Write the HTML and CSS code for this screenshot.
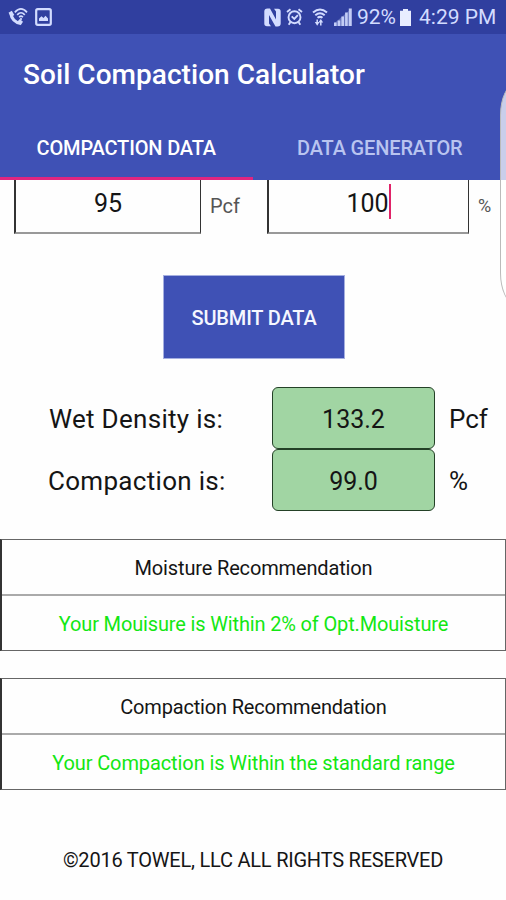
FILE: index.html
```html
<!DOCTYPE html>
<html lang="en">
<head>
<meta charset="utf-8">
<title>Soil Compaction Calculator</title>
<link rel="stylesheet" href="styles.css">
</head>
<body>
<div class="screen">
  <div class="status">
    <svg class="ico-call" width="20" height="20" viewBox="0 0 20 20" fill="none" stroke="#d3dcff">
      <path d="M2.600 6C3.500 11.500 7 15.500 12.800 16.500" stroke-width="3"/>
      <path d="M.5 5.800 3.800 3.800 6.300 8 3.500 10zM9.500 14.500l2.300-2.600 3.200 2.900-2.300 3.500z" fill="#d3dcff" stroke="none"/>
      <path d="M6.800 5.400Q13-1.500 19 5.400M9.200 7.900Q13 3.600 16.800 7.900M11.200 10.300Q13 8.100 14.900 10.300" stroke-width="1.700"/>
      <circle cx="13" cy="12" r="1.100" fill="#d3dcff" stroke="none"/>
    </svg>
    <svg class="ico-image" width="17" height="18" viewBox="0 0 17 18">
      <rect x="1.200" y="1.200" width="14.600" height="15.600" rx="1.500" fill="none" stroke="#d3dcff" stroke-width="2.200"/>
      <path d="M4 13v-2.500l2.500-2.200 2 1.700 2-2.200 2.500 2.700V13z" fill="#d3dcff"/>
    </svg>
    <span class="spacer"></span>
    <svg class="ico-nfc" width="17" height="19" viewBox="0 0 17 19">
      <path d="M3.500.5H6L12 11.500V3.500L10 .8H14Q16.700.8 16.700 3.500v12Q16.700 18.500 13.500 18.500H11.500L5 7V15.500L7 18.200H3Q.3 18.200.3 15.500V3.500Q.3.500 3.500.5z" fill="#d3dcff"/>
    </svg>
    <svg class="ico-alarm" width="17" height="18" viewBox="0 0 17 18" fill="none" stroke="#d3dcff" stroke-width="1.900">
      <circle cx="8.500" cy="9.200" r="6"/>
      <path d="M1 4 4.500 1.200M16 4l-3.500-2.800M4.500 14 2.700 16.700M12.500 14l1.800 2.700M5.700 8.400l2.600 2.500 3.600-3.800"/>
    </svg>
    <svg class="ico-wifi" width="16" height="19" viewBox="0 0 16 19" fill="none" stroke="#d3dcff" stroke-width="2">
      <path d="M1 4.400Q8-1.500 15 4.400M3.300 7.200Q8 3.300 12.700 7.200M5.500 9.800Q8 7.900 10.500 9.800"/>
      <path d="M5.200 11.500v3M8.800 13.500v4" stroke-width="1.500"/>
      <path d="M2.800 14h4.800L5.200 17.800zM6.400 14.500 8.800 11l2.400 3.500z" fill="#d3dcff" stroke="none"/>
    </svg>
    <svg class="ico-signal" width="18" height="18" viewBox="0 0 18 18" fill="#c3cdf6">
      <path d="M0 14.500h2.600V18H0zM3.700 12.500h2.600V18H3.700zM7.400 8.500H10V18H7.400zM11.100 4.500h2.600V18h-2.600zM14.800.5h2.900V18h-2.900z"/>
      <path d="M0 15.500 17.700.5V18H0z" opacity=".35"/>
    </svg>
    <span class="pct">92%</span>
    <svg class="ico-batt" width="11" height="17" viewBox="0 0 11 17" fill="#e8edff">
      <path d="M3 0h5v1.800h3V17H0V1.800h3z"/>
    </svg>
    <span class="clock">4:29 PM</span>
  </div>

  <header class="appbar">
    <h1 class="title">Soil Compaction Calculator</h1>
    <nav class="tabs">
      <a class="tab active">COMPACTION DATA</a>
      <a class="tab">DATA GENERATOR</a>
    </nav>
  </header>

  <main>
    <div class="fields">
      <div class="field first"><span>95</span></div>
      <span class="unit">Pcf</span>
      <div class="field second"><span>100</span><i class="caret"></i></div>
      <span class="unit last">%</span>
    </div>

    <button class="submit">SUBMIT DATA</button>

    <div class="results">
      <span class="label wet">Wet Density is:</span><div class="value">133.2</div><span class="measure">Pcf</span>
      <span class="label comp">Compaction is:</span><div class="value">99.0</div><span class="measure">%</span>
    </div>

    <section class="card moisture">
      <div class="head">Moisture Recommendation</div>
      <div class="note">Your Mouisure is Within 2% of Opt.Mouisture</div>
    </section>
    <section class="card compaction">
      <div class="head">Compaction Recommendation</div>
      <div class="note">Your Compaction is Within the standard range</div>
    </section>
  </main>

  <footer>©2016 TOWEL, LLC ALL RIGHTS RESERVED</footer>
  <div class="edge"></div>
</div>
</body>
</html>
```

FILE: styles.css
```css
* { box-sizing: border-box; }
body { margin: 0; background: #fff; color: #151515; font-family: Roboto, "Liberation Sans", sans-serif; }
.screen { position: relative; width: 506px; height: 900px; overflow: hidden; background: #fefefe; white-space: nowrap; }

.status { display: flex; align-items: center; height: 34px; padding: 0 9px 0 8px; background: #303f9f; color: #d3dcff; font-size: 21px; }
.status svg { flex: none; }
.ico-image { margin-left: 7px; }
.spacer { flex: 1; }
.ico-alarm { margin-left: 5px; }
.ico-wifi { margin-left: 9px; }
.ico-signal { margin-left: 6px; }
.pct { width: 40px; margin-left: 5px; line-height: 38px; }
.ico-batt { margin-left: 3px; }
.clock { width: 78px; margin-left: 8px; line-height: 38px; }

.appbar { height: 146px; background: #3f51b5; color: #fff; }
.title { margin: 0; height: 82px; padding-left: 23px; font-size: 28px; letter-spacing: .05px; line-height: 82px; font-weight: 500; }
.tabs { display: flex; height: 64px; }
.tab { flex: 1; padding-top: 1px; text-align: center; font-size: 20px; letter-spacing: -.15px; line-height: 62px; font-weight: 500; color: #b9c4f0; }
.tab.active { color: #fff; border-bottom: 3px solid #df2580; }
.tab:last-child { padding-left: 1px; }

.fields { display: flex; height: 54px; padding-left: 14px; }
.field { display: flex; justify-content: center; border: solid #333; border-width: 0 1px 2px 2px; border-bottom-color: #999; font-size: 25px; line-height: 48px; }
.first { width: 187px; }
.second { width: 202px; }
.unit { width: 66px; padding-left: 9px; font-size: 20px; line-height: 52px; color: #555; }
.unit.last { width: 30px; padding-left: 9px; font-size: 18px; }
.caret { width: 2px; height: 35px; margin-top: 4px; background: #e02368; }

.submit { display: block; width: 182px; height: 84px; margin: 41px 0 0 163px; padding: 2px 0 0; border: 1px solid #a5afe0; background: #3f51b5; color: #f5f7ff; font: 500 20px Roboto, sans-serif; letter-spacing: -.15px; }

.results { display: grid; grid-template-columns: 272px 163px 71px; grid-auto-rows: 62px; margin-top: 28px; font-size: 26px; line-height: 65px; }
.label { padding-left: 49px; letter-spacing: .3px; }
.comp { padding-left: 48px; }
.value { border: 1px solid #244127; border-radius: 6px; background: #a1d5a3; text-align: center; font-size: 25px; line-height: 64px; }
.measure { padding-left: 14px; }

.card { height: 112px; border: 1px solid #666; border-left: 2px solid #333; text-align: center; font-size: 20px; letter-spacing: -.15px; }
.moisture { margin-top: 28px; }
.compaction { margin-top: 27px; letter-spacing: -.18px; }
.head { height: 56px; border-bottom: 2px solid #aaa; line-height: 56px; }
.note { line-height: 56px; color: #13e713; }
.compaction .note { letter-spacing: -.1px; }

footer { margin-top: 56px; text-align: center; font-size: 20px; letter-spacing: -.22px; line-height: 28px; }

/* Edge-panel handle floating over the right side of the screen */
.edge { position: absolute; left: 500px; top: 84px; width: 30px; height: 220px; border: 1px solid #bbb; border-radius: 24px / 50px; background: rgba(255, 255, 255, .72); }
```
